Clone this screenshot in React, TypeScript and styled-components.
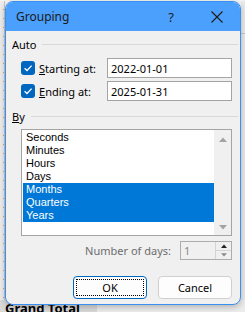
import React from 'react';
import styled, { createGlobalStyle } from 'styled-components';

const GlobalStyle = createGlobalStyle`
    html, body {
        margin: 0;
        padding: 0;
        background: #ececec;
        overflow: hidden;
    }
    body {
        font-family: "Noto Sans", "Liberation Sans", sans-serif;
        font-size: 11px;
        color: #000;
    }
`;

const units = ['Seconds', 'Minutes', 'Hours', 'Days', 'Months', 'Quarters', 'Years'];
const selected = ['Months', 'Quarters', 'Years'];

const CheckIcon = () => (
    <svg width="10" height="10" viewBox="0 0 10 10">
        <path d="M1.6 5.2 L4 7.5 L8.6 2.6" fill="none" stroke="#fff" strokeWidth="1.3" />
    </svg>
);

const CloseIcon = () => (
    <svg width="12" height="12" viewBox="0 0 12 12">
        <path d="M0.5 0.5 L11.5 11.5 M11.5 0.5 L0.5 11.5" stroke="#1a1a1a" strokeWidth="1.1" />
    </svg>
);

const Arrow: React.FC<{ up?: boolean; color: string; size?: number }> = ({ up, color, size = 8 }) => (
    <svg width={size} height={size / 2 + 1} viewBox="0 0 8 5">
        <path d={up ? 'M0 5 L4 0.5 L8 5 Z' : 'M0 0 L8 0 L4 4.5 Z'} fill={color} />
    </svg>
);

const Grouping: React.FC = () => {
    return (
        <Sheet>
            <GlobalStyle />
            <TopRow>
                <LeftStrip />
                <Dialog>
                    <TitleBar>
                        <Title>Grouping</Title>
                        <HelpMark>?</HelpMark>
                        <CloseButton>
                            <CloseIcon />
                        </CloseButton>
                    </TitleBar>
                    <Body>
                        <GroupHeading>
                            <span>Auto</span>
                            <Rule />
                        </GroupHeading>
                        <FieldRow>
                            <Checkbox>
                                <CheckIcon />
                            </Checkbox>
                            <FieldLabel>
                                <u>S</u>tarting at:
                            </FieldLabel>
                            <TextInput>2022-01-01</TextInput>
                        </FieldRow>
                        <FieldRow $gap>
                            <Checkbox>
                                <CheckIcon />
                            </Checkbox>
                            <FieldLabel>
                                <u>E</u>nding at:
                            </FieldLabel>
                            <TextInput>2025-01-31</TextInput>
                        </FieldRow>
                        <GroupHeading $by>
                            <span>
                                <u>B</u>y
                            </span>
                            <Rule />
                        </GroupHeading>
                        <ListBox>
                            <Items>
                                {units.map(u => (
                                    <Item key={u} $selected={selected.includes(u)}>
                                        {u}
                                    </Item>
                                ))}
                            </Items>
                            <ScrollBar>
                                <Arrow up color="#a3a3a3" />
                                <Arrow color="#a3a3a3" />
                            </ScrollBar>
                        </ListBox>
                        <DaysRow>
                            <DaysLabel>Number of days:</DaysLabel>
                            <SpinBox>
                                <SpinValue>1</SpinValue>
                                <SpinButtons>
                                    <SpinButton>
                                        <Arrow up color="#222" size={6} />
                                    </SpinButton>
                                    <SpinButton>
                                        <Arrow color="#8a8a8a" size={6} />
                                    </SpinButton>
                                </SpinButtons>
                            </SpinBox>
                        </DaysRow>
                        <ButtonRow>
                            <Button $primary>
                                <FocusRing>OK</FocusRing>
                            </Button>
                            <Button>Cancel</Button>
                        </ButtonRow>
                    </Body>
                </Dialog>
                <RightStrip />
            </TopRow>
            <TotalRow>
                <TotalCell>Grand Total</TotalCell>
            </TotalRow>
        </Sheet>
    );
};

const Sheet = styled.div`
    display: flex;
    flex-direction: column;
    width: 245px;
    height: 312px;
    overflow: hidden;
`;

const TopRow = styled.div`
    display: flex;
    padding-top: 1px;
    background: #f4f4f4;
`;

const LeftStrip = styled.div`
    width: 5px;
    flex: none;
    border-right: 1px solid #c6c6c6;
    box-sizing: border-box;
    background:
        repeating-linear-gradient(180deg, transparent 0 8px, #f0a040 8px 9px) right 0 top 0 / 1px 100% no-repeat,
        #ececec;
`;

const RightStrip = styled.div`
    flex: 1;
    background:
        linear-gradient(#c8c8c8, #c8c8c8) 0 32px / 100% 1px no-repeat,
        #e9e9e9;
`;

const Dialog = styled.div`
    position: relative;
    z-index: 1;
    width: 236px;
    height: 304px;
    flex: none;
    box-sizing: border-box;
    display: flex;
    flex-direction: column;
    border: 1px solid #3a90f2;
    border-radius: 8px;
    background: #f0f0f0;
    overflow: hidden;
    box-shadow: 0 2px 6px rgba(0, 0, 0, 0.25);
`;

const TitleBar = styled.div`
    height: 29px;
    flex: none;
    display: flex;
    align-items: center;
    background: #4ca0fd;
    padding-left: 10px;
`;

const Title = styled.div`
    flex: 1;
    font-size: 12px;
    color: #1a1a1a;
`;

const HelpMark = styled.div`
    font-size: 13px;
    color: #1a1a1a;
    margin-right: 37px;
`;

const CloseButton = styled.div`
    width: 12px;
    height: 12px;
    margin-right: 17px;
    display: flex;
`;

const Body = styled.div`
    display: flex;
    flex-direction: column;
    padding: 6px 2px 0 6px;
`;

const GroupHeading = styled.div<{ $by?: boolean }>`
    display: flex;
    align-items: center;
    gap: 6px;
    height: 15px;
    margin-top: ${p => (p.$by ? '8px' : '0')};
`;

const Rule = styled.div`
    flex: 1;
    height: 1px;
    background: #d9d9d9;
`;

const FieldRow = styled.div<{ $gap?: boolean }>`
    display: flex;
    align-items: center;
    margin: ${p => (p.$gap ? '3px' : '6px')} 6px 0 9px;
    height: 20px;
`;

const Checkbox = styled.div`
    width: 14px;
    height: 14px;
    border-radius: 3px;
    background: #0067c0;
    display: flex;
    align-items: center;
    justify-content: center;
    flex: none;
`;

const FieldLabel = styled.div`
    margin-left: 4px;
    width: 68px;
`;

const TextInput = styled.div`
    flex: 1;
    height: 20px;
    box-sizing: border-box;
    border: 1px solid #a4a4a4;
    background: #fff;
    padding-left: 3px;
    display: flex;
    align-items: center;
`;

const ListBox = styled.div`
    display: flex;
    margin: 5px 6px 0 9px;
    height: 107px;
    box-sizing: border-box;
    border: 1px solid #a4a4a4;
    background: #fff;
`;

const Items = styled.div`
    flex: 1;
    padding: 1px 0 0 1px;
`;

const Item = styled.div<{ $selected?: boolean }>`
    height: 13px;
    line-height: 13px;
    padding-left: 3px;
    font-family: "Liberation Sans", "Noto Sans", sans-serif;
    font-size: 11px;
    background: ${p => (p.$selected ? '#0078d7' : 'transparent')};
    color: ${p => (p.$selected ? '#fff' : '#000')};
`;

const ScrollBar = styled.div`
    width: 17px;
    flex: none;
    background: #f0f0f0;
    display: flex;
    flex-direction: column;
    align-items: center;
    justify-content: space-between;
    padding: 7px 0 5px;
    box-sizing: border-box;
`;

const DaysRow = styled.div`
    display: flex;
    justify-content: flex-end;
    align-items: center;
    gap: 9px;
    margin: 5px 6px 0 0;
`;

const DaysLabel = styled.div`
    color: #6d6d6d;
`;

const SpinBox = styled.div`
    width: 52px;
    height: 19px;
    box-sizing: border-box;
    border: 1px solid #adadad;
    background: #f0f0f0;
    display: flex;
`;

const SpinValue = styled.div`
    flex: 1;
    color: #8a8a8a;
    padding-left: 3px;
    line-height: 17px;
`;

const SpinButtons = styled.div`
    width: 15px;
    display: flex;
    flex-direction: column;
    border-left: 1px solid #d4d4d4;
`;

const SpinButton = styled.div`
    flex: 1;
    display: flex;
    align-items: center;
    justify-content: center;
    & + & {
        border-top: 1px solid #d4d4d4;
    }
`;

const ButtonRow = styled.div`
    display: flex;
    justify-content: flex-end;
    gap: 11px;
    margin: 16px 6px 0 0;
`;

const Button = styled.div<{ $primary?: boolean }>`
    width: 74px;
    height: 23px;
    box-sizing: border-box;
    border: 1px solid ${p => (p.$primary ? '#0067c0' : '#d0d0d0')};
    border-radius: 4px;
    background: #fdfdfd;
    display: flex;
    align-items: center;
    justify-content: center;
    padding: 2px;
`;

const FocusRing = styled.div`
    flex: 1;
    align-self: stretch;
    border: 1px dotted #000;
    display: flex;
    align-items: center;
    justify-content: center;
`;

const TotalRow = styled.div`
    display: flex;
    margin-top: -5px;
    height: 20px;
    background: #ececec;
`;

const TotalCell = styled.div`
    width: 92px;
    background: #d9d9d9;
    font-weight: bold;
    font-size: 13px;
    padding-left: 5px;
    line-height: 16px;
`;

export default Grouping;
